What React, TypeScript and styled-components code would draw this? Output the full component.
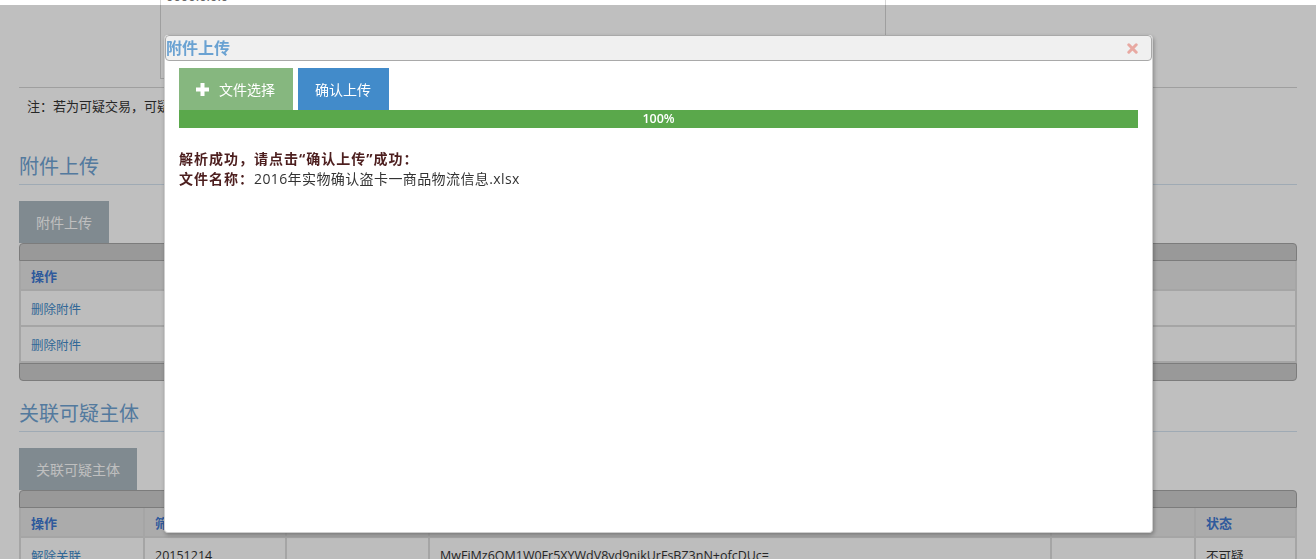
import React from "react";
import styled, { createGlobalStyle } from "styled-components";

const GlobalStyle = createGlobalStyle`
  html, body { margin: 0; padding: 0; background: #fff; overflow: hidden; }
  body {
    width: 1316px;
    height: 559px;
    font-family: "Open Sans", "Noto Sans CJK SC", sans-serif;
    color: #333;
  }
`;

const Page = styled.div`
  padding: 0 19px;
  margin-top: -14px;
`;

const FormRow = styled.div`
  padding: 0 0 8px 141px;
  border-bottom: 1px solid #d5d5d5;
`;

const TextBox = styled.div`
  box-sizing: border-box;
  width: 726px;
  height: 93px;
  border: 1px solid #d5d5d5;
  border-top: 0;
  padding: 3px 5px 0;
  font-size: 13px;
  line-height: 15px;
  color: #666;
`;

const Note = styled.div`
  padding: 8px 0 0 8px;
  font-size: 13px;
  line-height: 20px;
  color: #333;
`;

const SectionTitle = styled.h3<{ $gap: number }>`
  margin: ${(p) => p.$gap}px 0 16px;
  padding: 0 0 3px;
  font-size: 20px;
  line-height: 28px;
  font-weight: normal;
  color: #6fa3d3;
  border-bottom: 1px solid #d4e3f0;
`;

const SectionButton = styled.div`
  display: inline-flex;
  align-items: center;
  height: 42px;
  padding: 0 17px;
  background: #abb8c0;
  color: #fff;
  font-size: 14px;
  vertical-align: top;
`;

const Bar = styled.div<{ $pos: "top" | "bottom" }>`
  box-sizing: border-box;
  height: 18px;
  background: #cccccc;
  border: 1px solid #a6a6a6;
  border-radius: ${(p) => (p.$pos === "top" ? "4px 4px 0 0" : "0 0 4px 4px")};
`;

const Grid = styled.div<{ $cols: string }>`
  display: grid;
  grid-template-columns: ${(p) => p.$cols};
  gap: 2px;
  padding: 0 2px 2px;
  background: #dcdcdc;
`;

const HeadCell = styled.div`
  height: 28px;
  display: flex;
  align-items: center;
  padding: 0 10px;
  background: #e5e5e5;
  font-size: 13px;
  font-weight: bold;
  color: #3f78d0;
  white-space: nowrap;
  overflow: hidden;
`;

const Cell = styled.div`
  height: 34px;
  display: flex;
  align-items: center;
  padding: 0 10px;
  background: #fcfcfc;
  font-size: 12.5px;
  color: #333;
  white-space: nowrap;
  overflow: hidden;
`;

const Link = styled.a`
  color: #428bca;
  text-decoration: none;
`;

const Overlay = styled.div`
  position: fixed;
  left: 0;
  right: 0;
  top: 5px;
  bottom: 0;
  background: rgba(0, 0, 0, 0.25);
`;

const Dialog = styled.div`
  position: fixed;
  left: 164px;
  top: 35px;
  width: 989px;
  height: 498px;
  box-sizing: border-box;
  background: #fff;
  border: 1px solid #cfcfcf;
  border-top: 0;
  border-radius: 4px;
  box-shadow: 1px 2px 4px rgba(0, 0, 0, 0.3);
  display: flex;
  flex-direction: column;
`;

const DialogHeader = styled.div`
  box-sizing: border-box;
  height: 26px;
  background: #f0f0f0;
  border: 1px solid #a9a9a9;
  border-radius: 4px;
  display: flex;
  align-items: center;
  justify-content: space-between;
  padding: 0 13px 0 0;
`;

const DialogTitle = styled.span`
  font-size: 16px;
  line-height: 24px;
  font-weight: bold;
  color: #6aa2d2;
`;

const CloseIcon = styled.svg`
  display: block;
  width: 11px;
  height: 11px;
`;

const DialogBody = styled.div`
  padding: 7px 14px 0;
`;

const Toolbar = styled.div`
  display: flex;
  gap: 5px;
`;

const ActionButton = styled.div<{ $bg: string }>`
  display: flex;
  align-items: center;
  gap: 10px;
  height: 42px;
  padding: 0 18px 0 17px;
  background: ${(p) => p.$bg};
  color: #fff;
  font-size: 14px;
`;

const PlusIcon = styled.svg`
  display: block;
  width: 13px;
  height: 13px;
`;

const Progress = styled.div`
  height: 18px;
  background: #5aa84b;
  color: #fff;
  font-size: 12.5px;
  font-weight: 600;
  line-height: 18px;
  text-align: center;
`;

const Result = styled.div`
  margin-top: 21px;
  font-size: 14px;
  line-height: 20px;
  color: #333;
`;

const Strong = styled.span`
  font-weight: bold;
  letter-spacing: 1px;
  color: #4d1f1f;
`;

const FileName = styled.span`
  letter-spacing: 0.4px;
`;

export default function App() {
  return (
    <>
      <GlobalStyle />
      <Page>
        <FormRow>
          <TextBox>0000.0.0.0</TextBox>
        </FormRow>
        <Note>注：若为可疑交易，可疑原因为必填项，请上传相关附件。</Note>

        <SectionTitle $gap={37}>附件上传</SectionTitle>
        <SectionButton>附件上传</SectionButton>
        <Bar $pos="top" />
        <Grid $cols="200px 600px 1fr">
          <HeadCell>操作</HeadCell>
          <HeadCell>附件名称</HeadCell>
          <HeadCell>上传时间</HeadCell>
          <Cell>
            <Link>删除附件</Link>
          </Cell>
          <Cell>2016年实物确认盗卡一商品物流信息.xlsx</Cell>
          <Cell></Cell>
          <Cell>
            <Link>删除附件</Link>
          </Cell>
          <Cell>可疑交易说明.docx</Cell>
          <Cell></Cell>
        </Grid>
        <Bar $pos="bottom" />

        <SectionTitle $gap={19}>关联可疑主体</SectionTitle>
        <SectionButton>关联可疑主体</SectionButton>
        <Bar $pos="top" />
        <Grid $cols="122px 140px 141px 620px 142px 1fr">
          <HeadCell>操作</HeadCell>
          <HeadCell>筛查日期</HeadCell>
          <HeadCell>主体类型</HeadCell>
          <HeadCell>主体证件号码</HeadCell>
          <HeadCell>主体名称</HeadCell>
          <HeadCell>状态</HeadCell>
          <Cell>
            <Link>解除关联</Link>
          </Cell>
          <Cell>20151214</Cell>
          <Cell></Cell>
          <Cell>MwFiMz6QM1W0Fr5XYWdV8yd9njkUrFsBZ3nN+ofcDUc=</Cell>
          <Cell></Cell>
          <Cell>不可疑</Cell>
        </Grid>
      </Page>

      <Overlay />

      <Dialog>
        <DialogHeader>
          <DialogTitle>附件上传</DialogTitle>
          <CloseIcon viewBox="0 0 11 11">
            <path
              d="M1.8 1.8 L9.2 9.2 M9.2 1.8 L1.8 9.2"
              stroke="#e8a9a2"
              strokeWidth="3"
              strokeLinecap="round"
            />
          </CloseIcon>
        </DialogHeader>
        <DialogBody>
          <Toolbar>
            <ActionButton $bg="#86b77f">
              <PlusIcon viewBox="0 0 13 13">
                <rect x="4.5" y="0" width="4" height="13" fill="#fff" />
                <rect x="0" y="4.5" width="13" height="4" fill="#fff" />
              </PlusIcon>
              文件选择
            </ActionButton>
            <ActionButton $bg="#428bca">确认上传</ActionButton>
          </Toolbar>
          <Progress>100%</Progress>
          <Result>
            <Strong>解析成功，请点击“确认上传”成功：</Strong>
            <br />
            <Strong>文件名称：</Strong>
            <FileName>2016年实物确认盗卡一商品物流信息.xlsx</FileName>
          </Result>
        </DialogBody>
      </Dialog>
    </>
  );
}
